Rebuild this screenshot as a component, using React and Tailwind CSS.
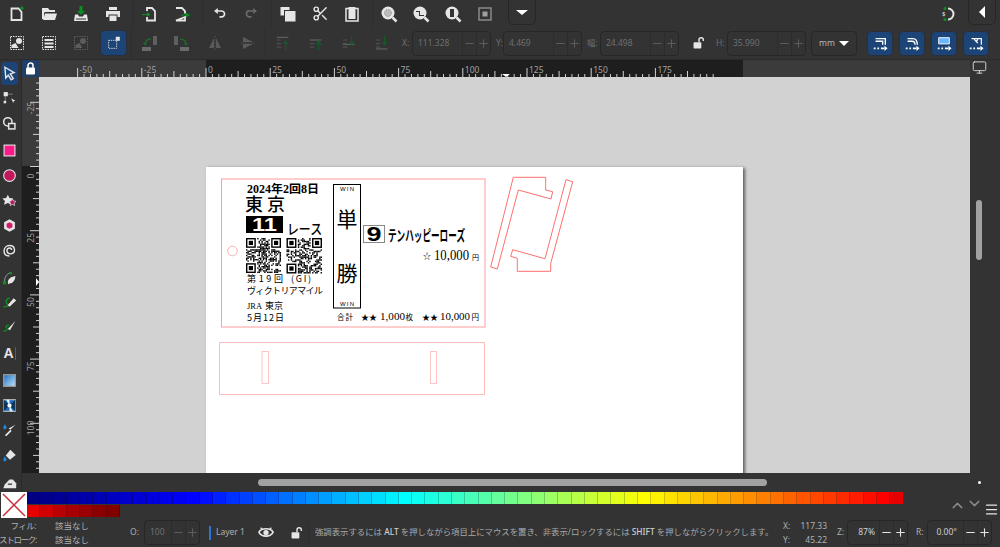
import React from 'react';
import { Minus, Plus, Scissors, ChevronUp, ChevronDown, Menu, Monitor } from 'lucide-react';

const W = '#e6e6e6';
const G = '#0c8f22';
const D = '#6a6a6a';

function Ic({ children, size = 18, className = '' }) {
  return <svg width={size} height={size} viewBox="0 0 18 18" className={className}>{children}</svg>;
}
const T = (p) => <Ic size={15} {...p} />;

const dashBox = (c = W) => <rect x="2.5" y="2.5" width="13" height="13" fill="none" stroke={c} strokeDasharray="1.5 1" />;

// 上のツールバー
const NewIcon = () => <Ic><path d="M3.5 3.5h7l3 3.5v8h-10z" fill="none" stroke={W} strokeWidth="1.8" /><path d="M14 .5l1 2 2 .6-2 1-1 2-1-2-2-1 2-.6z" fill={G} /></Ic>;
const OpenIcon = () => <Ic><path d="M2 3h6l1.5 2H15v2H5l-1 1v6H2z" fill={W} /><path d="M5 8.5h12l-2 6.5H3z" fill={W} /></Ic>;
const SaveIcon = () => <Ic><path d="M7.5 1h3v5h2.5L9 10 5 6h2.5z" fill={G} /><path d="M3 9.5h3l1 2h4l1-2h3l1 6.5H2z" fill={W} /><path d="M4 14h10" stroke="#333" /></Ic>;
const PrintIcon = () => <Ic><path d="M5 2h8v3H5zM2 6h14v6h-2.5V9.5h-9V12H2zM5.5 10.5h7V16h-7z" fill={W} /></Ic>;
const ImportIcon = () => <Ic><path d="M6 6V3h5l3 3v9.5H6V12" fill="none" stroke={W} strokeWidth="1.8" /><path d="M1 9h5V7l3.5 2.5L6 12v-2H1z" fill={G} /></Ic>;
const ExportIcon = () => <Ic><path d="M3 3h6l3 3v2.5M12 12v3.5H3z" fill="none" stroke={W} strokeWidth="1.8" /><path d="M8 9.500h5V7.500l4 2.500-4 2.500v-2H8z" fill={G} /></Ic>;
const UndoIcon = ({ c = W }) => <Ic size={15}><path d="M4 6h7a3.500 3.500 0 0 1 1 7H9" fill="none" stroke={c} strokeWidth="2" /><path d="M7 2.500v7L2.500 6z" fill={c} /></Ic>;
const RedoIcon = ({ c = D }) => <Ic size={15}><path d="M14 6H7a3.500 3.500 0 0 0-1 7h3" fill="none" stroke={c} strokeWidth="2" /><path d="M11 2.500v7L15.500 6z" fill={c} /></Ic>;
const CopyIcon = () => <Ic><path d="M1.500 2h9v3H5v5.500H1.500z" fill={W} /><rect x="6" y="6" width="10.500" height="10.500" fill={W} /></Ic>;
const PasteIcon = () => <Ic><path d="M3 3.500h12v12.500H3z" fill="none" stroke={W} strokeWidth="1.500" /><rect x="5.500" y="2" width="7" height="12" fill={W} /></Ic>;
const ZoomIcon = ({ inner }) => <Ic><circle cx="8" cy="8" r="6.500" fill={W} />{inner}<path d="M12.500 12.500L16.500 16.500" stroke={W} strokeWidth="2.500" /></Ic>;

// 下のツールバー
const SelAll = () => <Ic>{dashBox()}<path d="M3.500 11l4-2 3 5H3.500z" fill={W} /><circle cx="11" cy="7" r="3" fill={W} /></Ic>;
const SelLayers = () => <Ic>{dashBox()}<path d="M4.500 5h9v2h-9zM4.500 8.500h9v2h-9zM4.500 12h9v2h-9z" fill={W} /></Ic>;
const SelDim = () => <Ic>{dashBox('#5c5c5c')}<path d="M3.500 11l4-2 3 5H3.500z" fill="#5c5c5c" /><circle cx="11" cy="7" r="3" fill="#5c5c5c" /></Ic>;
const TouchIcon = () => <Ic size={16}><rect x="3" y="6" width="9" height="9" fill="none" stroke={W} strokeDasharray="1.500 1" /><rect x="11" y="2" width="4.500" height="4.500" fill={W} /></Ic>;
const RotL = () => <Ic><rect x="2" y="13" width="9" height="4" fill="#6b6b6b" /><rect x="13" y="2" width="4" height="9" fill="#5f5f5f" /><path d="M5 11c0-4 2-6 6-6" fill="none" stroke="#1c6a2c" strokeWidth="1.600" /><path d="M3 9h4l-2 3z" fill="#1c6a2c" /></Ic>;
const RotR = () => <Ic><rect x="7" y="13" width="9" height="4" fill="#6b6b6b" /><rect x="1" y="2" width="4" height="9" fill="#5f5f5f" /><path d="M13 11c0-4-2-6-6-6" fill="none" stroke="#1c6a2c" strokeWidth="1.600" /><path d="M11 9h4l-2 3z" fill="#1c6a2c" /></Ic>;
const FlipH = () => <Ic><path d="M8 4v10H3zM10 4l5 10h-5z" fill="#5a5a5a" /><path d="M9 2v14" stroke="#4c4c4c" strokeDasharray="2 1" /></Ic>;
const FlipV = () => <Ic><path d="M4 8h10L4 3zM4 10h10L4 15z" fill="#5a5a5a" /><path d="M2 9h14" stroke="#4c4c4c" strokeDasharray="2 1" /></Ic>;
const Raise = ({ v }) => (
  <Ic size={16}>
    {v === 0 && <path d="M2 2h13v1.300H2z" fill="#626262" />}
    {v === 3 && <path d="M2 15h13v1.300H2z" fill="#626262" />}
    {(v === 1 || v === 2) && <path d={v === 1 ? 'M2 5h13v1.300H2z' : 'M2 10h13v1.300H2z'} fill="#626262" />}
    <path d="M2 5h5v1.300H2zM2 9h5v1.300H2zM2 13h5v1.300H2z" fill="#4e4e4e" />
    <path d={v < 2 ? 'M12 17V8M9.500 10.500L12 7l2.500 3.500' : 'M12 1v9M9.500 7.500L12 11l2.500-3.500'} fill="none" stroke="#17592a" strokeWidth="1.400" />
  </Ic>
);
const LockOpen = () => <Ic size={14}><rect x="2" y="8" width="10" height="8" rx="1" fill={W} /><path d="M9 8V5a2.800 2.800 0 0 1 5.600 0v1.500" fill="none" stroke={W} strokeWidth="1.800" /></Ic>;
const Scale = ({ v }) => (
  <Ic size={16}>
    {v === 0 && <path d="M4 4h11v7M4 7h8v4" fill="none" stroke="#fff" strokeWidth="1.500" />}
    {v === 1 && <path d="M4 4h6c3.500 0 5 3 5 7M4 7h5c2.500 0 3.500 2 3.500 4" fill="none" stroke="#fff" strokeWidth="1.500" />}
    {v === 2 && <path d="M3 3h12v7H3z" fill="#6ab7ff" stroke="#fff" />}
    {v === 3 && <path d="M4 4h11v7M7 5l4 4M11 5l-2 3" fill="none" stroke="#fff" strokeWidth="1.300" />}
    <path d="M2 15h2M6 15h2M10 15h4" stroke="#fff" strokeWidth="1.800" />
    <path d="M14 12l3.500 3-3.500 3z" fill="#fff" />
  </Ic>
);

// 左のツール
const tools = [
  <T key="a"><path d="M3.500 1.500l11 6.500-4.500 1.500 3.500 5.500-2.500 1.500-3.500-5.500-3 3.500z" fill="#174a80" stroke={W} strokeWidth="1.700" /></T>,
  <T key="b"><path d="M4 5v9M4 5h9" stroke="#888" fill="none" /><rect x="2" y="2.500" width="5" height="5" fill={W} /><rect x="2" y="13" width="3" height="3" fill={W} /><path d="M11 10l5 3-2 .5-.5 2z" fill={W} /></T>,
  <T key="c"><circle cx="7" cy="7" r="5" fill="none" stroke={W} strokeWidth="1.800" /><rect x="8" y="9" width="7.500" height="6.500" fill="#333" stroke={W} strokeWidth="1.800" /></T>,
  <T key="d"><rect x="2.500" y="2.500" width="13" height="13" fill="#ff1a8c" stroke={W} strokeWidth="1.300" /></T>,
  <T key="e"><circle cx="9" cy="9" r="7" fill="#c2185b" stroke={W} strokeWidth="1.300" /></T>,
  <T key="f"><path d="M7 2l2 4 4.500.5-3 3 1 4.500L7 12l-4.500 2 1-4.500-3-3L5 6z" fill={W} /><path d="M12.500 7l1.300 2.600 3 .4-2.200 2 .6 3-2.700-1.400-2.700 1.400.6-3-2.200-2 3-.4z" fill="#b0165a" stroke={W} strokeWidth=".8" /></T>,
  <T key="g"><path d="M9 1.500l6.500 3.500v8L9 16.500 2.500 13V5z" fill={W} /><path d="M9 5l3.500 2v4L9 13l-3.500-2V7z" fill="#d11d6b" /></T>,
  <T key="h"><path d="M9 15.500c-4 0-6.500-2.500-6.500-6S5 3 9 3s6 2.500 6 5.500S13 13 10 13s-4-2-4-4 1.500-3 3-3 2.500 1 2.500 2.500" fill="none" stroke={W} strokeWidth="1.700" /></T>,
  <T key="i"><path d="M3 13C3 7 6 3 11 2" fill="none" stroke="#aaa" /><rect x="1" y="12" width="4" height="4" fill={G} /><rect x="9" y="1" width="3" height="3" fill={G} /><path d="M7 14c0-4 3-7 9-8 0 5-3 9-7 9l-1.500 1z" fill={W} /></T>,
  <T key="j"><path d="M2 15c2-3 4 0 5-2s-3-3-2-6 3-2 4-4" fill="none" stroke={G} strokeWidth="1.700" /><path d="M7 12l7-8 3 2.500-8 7.500z" fill={W} /></T>,
  <T key="k"><path d="M2 15c2-2 3 0 4-2s-2-2-1-4 2 0 3-2" fill="none" stroke={G} strokeWidth="1.500" /><path d="M7 12l9-9.500-6.500 11z" fill={W} /></T>,
  <div key="l" className="flex items-center"><span className="font-['Liberation_Sans',sans-serif] text-[14px] leading-none font-bold text-[#e6e6e6]">A</span><span className="ml-[1px] h-[13px] w-[1px] bg-[#0c8f22]" /></div>,
  <T key="m"><defs><linearGradient id="grad" x1="0" y1="0" x2="1" y2="1"><stop offset="0" stopColor="#1c6fc0" /><stop offset="1" stopColor="#bfe3ff" /></linearGradient></defs><rect x="2" y="2" width="14" height="14" fill="url(#grad)" stroke="#999" strokeWidth="1.500" /></T>,
  <T key="n"><rect x="2" y="2" width="14" height="14" fill="#1c6fc0" stroke="#bbb" strokeWidth="1.300" /><path d="M2 2l7 7-7 7zM16 2l-7 7 7 7z" fill="#0d3558" /><circle cx="9" cy="9" r="2.500" fill="#fff" /><path d="M5 2h4L9 9zM13 16H9l0-7z" fill="#eaf4ff" /></T>,
  <T key="o"><path d="M16 2l-6 6 1.500 1.500-6 6H4v-1.500l6-6L8 6.500z" fill={W} /><path d="M3.500 1.500c1 2 2 3 2 4a2 2 0 0 1-4 0c0-1 1-2 2-4z" fill="#1b8ae0" /></T>,
  <T key="p"><path d="M10 2l6.500 6.500-7 5.500-5-5z" fill={W} /><path d="M3.500 10c1 2 2 3 2 4a2 2 0 0 1-4 0c0-1 1-2 2-4z" fill="#1b8ae0" /></T>,
  <T key="q"><path d="M1.500 16l2-5 5.500-5.500h4L17 10v6z" fill={W} /><path d="M7 11h5" stroke="#333" strokeWidth="1.500" /></T>,
];
const toolH = ['h-[24px]', 'h-[28px]', 'h-[26px]', 'h-[24px]', 'h-[26px]', 'h-[24px]', 'h-[26px]', 'h-[30px]', 'h-[18px]', 'h-[30px]', 'h-[24px]', 'h-[30px]', 'h-[20px]', 'h-[30px]', 'h-[20px]', 'h-[26px] pt-[8px]'];

function Spin({ value, w, light = false, align = 'left', vw = '' }) {
  const c = light ? 'text-[#cfcfcf]' : 'text-[#6f6f6f]';
  const ctl = light ? 'text-[#e6e6e6]' : 'text-[#5c5c5c]';
  return (
    <div className={`flex h-[25px] items-center rounded-[4px] border border-[#272727] ${w}`}>
      <span className={`${vw} ${align === 'right' ? 'text-right' : 'pl-[5px]'} ${c}`}>{value}</span>
      <div className={`ml-auto flex h-full items-center border-l border-[#2c2c2c] ${ctl}`}>
        <Minus size={13} strokeWidth={2} />
      </div>
      <div className={`flex h-full items-center border-l border-[#2c2c2c] ${ctl}`}>
        <Plus size={13} strokeWidth={2} />
      </div>
    </div>
  );
}

const Btn = ({ children, w = 'w-8' }) => <div className={`flex h-full shrink-0 items-center justify-center ${w}`}>{children}</div>;
const Sep = () => <div className="h-full w-[5px] shrink-0 border-r border-[#2e2e2e]" />;
const BlueBtn = ({ children }) => <div className="flex h-[25px] w-[26px] items-center justify-center rounded-[4px] border border-[#282f38] bg-[#1c4476]">{children}</div>;

const hStart = 206;
const unit = 64.2;

function HRuler() {
  const ticks = [];
  for (let i = -20; i < 80; i++) {
    const x = hStart + (i * unit) / 10;
    if (x < 39 || x > 970) continue;
    const major = i % 10 === 0;
    const mid = i % 5 === 0;
    ticks.push(<line key={i} x1={x} x2={x} y1={major ? 68 : mid ? 71 : 74} y2="77" stroke="#d0d0d0" strokeWidth="1" />);
    if (major) {
      ticks.push(<text key={'t' + i} x={x + 2} y="73" fontSize="8.500" fill="#a0a0a0" className="font-['Noto_Sans',sans-serif]">{i * 2.5}</text>);
    }
  }
  return (
    <svg width="931" height="17" viewBox="39 60 931 17" className="shrink-0">
      <rect x="39" y="60" width="931" height="17" fill="#3b3b3b" />
      <rect x="206" y="60" width="537" height="17" fill="#1e1e1e" />
      {ticks}
      <path d="M502 74h8l-4 3z" fill="#fff" />
    </svg>
  );
}

function VRuler() {
  const ticks = [];
  for (let i = -14; i < 50; i++) {
    const y = 166.500 + (i * unit) / 10;
    if (y < 77 || y > 473) continue;
    const major = i % 10 === 0;
    const mid = i % 5 === 0;
    ticks.push(<line key={i} y1={y} y2={y} x1={major ? 30 : mid ? 33 : 36} x2="39" stroke="#d0d0d0" strokeWidth="1" />);
    if (major) {
      ticks.push(<text key={'t' + i} transform={`translate(34 ${y + 12}) rotate(-90)`} fontSize="8.500" fill="#a0a0a0" className="font-['Noto_Sans',sans-serif]">{i * 2.5}</text>);
    }
  }
  return (
    <svg width="17" height="396" viewBox="22 77 17 396" className="shrink-0">
      <rect x="22" y="77" width="17" height="396" fill="#3b3b3b" />
      <rect x="22" y="166" width="17" height="307" fill="#1e1e1e" />
      {ticks}
      <path d="M36 278v8l3-4z" fill="#fff" />
    </svg>
  );
}

// QR は見た目だけの疑似パターン
function Qr({ x, y, size, seed }) {
  const n = 25;
  const m = size / n;
  const cells = [];
  let s = seed;
  const inFinder = (c, r) => (c < 8 && r < 8) || (c > n - 9 && r < 8) || (c < 8 && r > n - 9);
  for (let r = 0; r < n; r++) {
    for (let c = 0; c < n; c++) {
      s = (s * 1103515245 + 12345) & 0x7fffffff;
      if (!inFinder(c, r) && (s >> 16) % 100 < 52) {
        cells.push(<rect key={r + '-' + c} x={x + c * m} y={y + r * m} width={m} height={m} fill="#000" />);
      }
    }
  }
  const finder = (c, r) => (
    <g key={c + '_' + r}>
      <rect x={x + c * m + m / 2} y={y + r * m + m / 2} width={6 * m} height={6 * m} fill="none" stroke="#000" strokeWidth={m} />
      <rect x={x + (c + 2) * m} y={y + (r + 2) * m} width={3 * m} height={3 * m} fill="#000" />
    </g>
  );
  return <g>{cells}{finder(0, 0)}{finder(n - 7, 0)}{finder(0, n - 7)}</g>;
}

const jp = "font-['Noto_Sans_CJK_JP',sans-serif]";
const se = "font-['Liberation_Serif','Noto_Sans_CJK_JP',serif]";
const ar = "font-['Liberation_Sans',sans-serif]";

function Ticket() {
  return (
    <svg width="537" height="306" viewBox="206 167 537 306">
      <rect x="221.500" y="179" width="263.500" height="148" fill="none" stroke="#ff9c9c" />
      <circle cx="232.500" cy="251" r="4.800" fill="none" stroke="#ffb0b0" />

      <text x="247" y="193" fontSize="11.500" fontWeight="700" textLength="72" lengthAdjust="spacingAndGlyphs" className={se}>2024年2回8日</text>
      <text x="245" y="211" fontSize="18" fontWeight="500" textLength="40" className={jp}>東京</text>
      <rect x="246" y="216" width="37" height="17" fill="#000" />
      <text x="252" y="231" fontSize="18" fontWeight="700" fill="#fff" textLength="25" lengthAdjust="spacingAndGlyphs" className={ar}>11</text>
      <text x="287" y="234" fontSize="14" fontWeight="500" textLength="35" lengthAdjust="spacingAndGlyphs" className={jp}>レース</text>

      <Qr x={246} y={238} size={35} seed={7} />
      <Qr x={286.500} y={238} size={35.500} seed={91} />

      <text x="247" y="282" fontSize="9" textLength="36" className={jp}>第19回</text>
      <text x="291" y="282" fontSize="9" textLength="20" fill="#000" className={jp}>(GI)</text>
      <text x="247" y="294" fontSize="9" textLength="76" className={jp}>ヴィクトリアマイル</text>
      <text x="247" y="309" fontSize="9" textLength="15" lengthAdjust="spacingAndGlyphs" className={se}>JRA</text>
      <text x="265" y="309" fontSize="9" textLength="18" className={jp}>東京</text>
      <text x="247" y="321" fontSize="9" textLength="37" className={jp}>5月12日</text>

      <rect x="333.500" y="184.500" width="27" height="123.500" fill="none" stroke="#000" />
      <text x="340" y="191" fontSize="6" textLength="14" className={ar}>WIN</text>
      <text x="340" y="306" fontSize="6" textLength="14" className={ar}>WIN</text>
      <text x="347" y="227" fontSize="21" textAnchor="middle" className={jp}>単</text>
      <text x="347" y="281" fontSize="21" textAnchor="middle" className={jp}>勝</text>

      <rect x="363.500" y="225.500" width="21" height="17" fill="none" stroke="#8a8a8a" />
      <text x="366.500" y="241" fontSize="20" fontWeight="700" textLength="15" lengthAdjust="spacingAndGlyphs" className={ar}>9</text>
      <text x="388" y="241" fontSize="15" fontWeight="700" textLength="77" lengthAdjust="spacingAndGlyphs" className={jp}>テンハッピーローズ</text>

      <text x="423" y="258.500" fontSize="8" textLength="8" className={jp}>☆</text>
      <text x="434" y="260" fontSize="15" textLength="35" lengthAdjust="spacingAndGlyphs" className={se}>10,000</text>
      <text x="472" y="260" fontSize="7" className={jp}>円</text>

      <text x="337" y="320" fontSize="7.500" textLength="16" className={jp}>合計</text>
      <text x="361" y="320" fontSize="8" textLength="16" className={jp}>★★</text>
      <text x="380" y="320" fontSize="11" textLength="25" lengthAdjust="spacingAndGlyphs" className={se}>1,000</text>
      <text x="405.500" y="320" fontSize="7.500" className={jp}>枚</text>
      <text x="422" y="320" fontSize="8" textLength="16" className={jp}>★★</text>
      <text x="440" y="320" fontSize="11" textLength="30" lengthAdjust="spacingAndGlyphs" className={se}>10,000</text>
      <text x="471.500" y="320" fontSize="7.500" className={jp}>円</text>

      <path d="M513.300 177.300H545.700V190L552.700 191.700L551 199L518.300 190L497.300 269L490.700 267Z" fill="none" stroke="#ff6f6f" />
      <path d="M566 179.700L572.700 181.700L550.700 263.300V271.300H517.300V258.300L510.700 256.300L512.700 249.700L545 258.700Z" fill="none" stroke="#ff6f6f" />

      <rect x="219.500" y="342.500" width="265" height="52" fill="none" stroke="#ffbcbc" />
      <rect x="262" y="351.500" width="6.500" height="32" fill="none" stroke="#ffc4c4" />
      <rect x="430.500" y="351.500" width="6" height="32" fill="none" stroke="#ffc4c4" />
    </svg>
  );
}

function paletteColors() {
  const out = [];
  const mix = (a, b, t) => a.map((v, i) => Math.round(v + (b[i] - v) * t));
  const stops = [
    [0, [0, 0, 128]],
    [12, [0, 0, 255]],
    [28, [0, 255, 255]],
    [37, [128, 255, 128]],
    [46, [255, 255, 0]],
    [64, [255, 0, 0]],
    [65, [230, 0, 0]],
  ];
  for (let i = 0; i < 66; i++) {
    let k = 0;
    while (k < stops.length - 2 && i > stops[k + 1][0]) k++;
    const [a, ca] = stops[k];
    const [b, cb] = stops[k + 1];
    const c = mix(ca, cb, (i - a) / (b - a));
    out.push(`rgb(${c[0]},${c[1]},${c[2]})`);
  }
  return out;
}

const reds = ['#e60000', '#d00000', '#ba0000', '#a80000', '#9a0000', '#8a0000', '#800000'];

export default function App() {
  return (
    <div className="flex h-[547px] w-[1000px] flex-col overflow-hidden bg-[#333333] font-['Noto_Sans','Noto_Sans_CJK_JP',sans-serif] text-[8.5px] text-[#b0b0b0]">
      {/* コマンドバー */}
      <div className="flex h-[27px] shrink-0 items-center pl-[1px]">
        <Btn><NewIcon /></Btn>
        <Btn><OpenIcon /></Btn>
        <Btn><SaveIcon /></Btn>
        <Btn><PrintIcon /></Btn>
        <Sep />
        <Btn><ImportIcon /></Btn>
        <Btn><ExportIcon /></Btn>
        <Sep />
        <Btn><UndoIcon /></Btn>
        <Btn><RedoIcon /></Btn>
        <Sep />
        <Btn><CopyIcon /></Btn>
        <Btn><Scissors size={17} color={W} strokeWidth={2} /></Btn>
        <Btn><PasteIcon /></Btn>
        <Sep />
        <Btn><ZoomIcon inner={<circle cx="8" cy="8" r="3.500" fill="#bbb" stroke="#888" strokeDasharray="1 1" />} /></Btn>
        <Btn><ZoomIcon inner={<path d="M4 6h4v4h4v1H7V7H4z" fill="#333" />} /></Btn>
        <Btn><ZoomIcon inner={<rect x="6" y="4" width="4" height="8" fill="#333" />} /></Btn>
        <Btn><Ic><rect x="3" y="3" width="12" height="12" fill="none" stroke="#8a8a8a" strokeWidth="1.500" /><rect x="6.500" y="6.500" width="5" height="5" fill="#a0a0a0" /></Ic></Btn>
        <div className="ml-[7px] flex h-[25px] w-[28px] items-center justify-center self-start rounded-b-[5px] border border-t-0 border-[#272727]">
          <div className="h-0 w-0 border-x-[6px] border-t-[5px] border-x-transparent border-t-white" />
        </div>
        <div className="ml-auto mr-[10px]">
          <Ic><path d="M8 3.500a5.500 5.500 0 1 1 0 11" fill="none" stroke={W} strokeWidth="2" /><circle cx="5" cy="3.500" r="1.500" fill={G} /><circle cx="5" cy="14.500" r="1.500" fill={G} /><text x="2" y="11" fontSize="6" fill={W}>$</text></Ic>
        </div>
        <div className="mr-[4px] flex h-[25px] w-[28px] items-center justify-center self-start rounded-b-[5px] border border-t-0 border-[#272727]">
          <div className="h-0 w-0 border-y-[6px] border-r-[6px] border-y-transparent border-r-white" />
        </div>
      </div>

      {/* コントロールバー */}
      <div className="flex h-[33px] shrink-0 items-center border-b border-[#2b2b2b] pl-[1px]">
        <Btn><SelAll /></Btn>
        <Btn><SelLayers /></Btn>
        <Btn><SelDim /></Btn>
        <div className="ml-[3px] flex h-[26px] w-[27px] shrink-0 items-center justify-center rounded-[4px] border border-[#282f38] bg-[#1c4476]"><TouchIcon /></div>
        <Sep />
        <Btn w="w-[33px]"><RotL /></Btn>
        <Btn w="w-[33px]"><RotR /></Btn>
        <Btn w="w-[33px]"><FlipH /></Btn>
        <Btn w="w-[33px]"><FlipV /></Btn>
        <div className="h-full w-[2px] shrink-0 border-r border-[#2e2e2e]" />
        <Btn w="w-[33px]"><Raise v={0} /></Btn>
        <Btn w="w-[33px]"><Raise v={1} /></Btn>
        <Btn w="w-[33px]"><Raise v={2} /></Btn>
        <Btn w="w-[33px]"><Raise v={3} /></Btn>
        <span className="ml-[4px] w-[10px] text-[#6f6f6f]">X:</span>
        <Spin value="111.328" w="w-[79px]" />
        <span className="ml-[5px] w-[7px] text-[#6f6f6f]">Y:</span>
        <Spin value="4.469" w="w-[79px]" />
        <span className="ml-[5px] w-[13px] text-[#6f6f6f]">幅:</span>
        <Spin value="24.498" w="w-[79px]" />
        <div className="ml-[13px] w-[24px]"><LockOpen /></div>
        <span className="w-[11px] text-[#6f6f6f]">H:</span>
        <Spin value="35.990" w="w-[79px]" />
        <div className="ml-[5px] flex h-[25px] w-[46px] items-center justify-center gap-[4px] rounded-[4px] border border-[#272727] text-[#b8b8b8]">
          mm
          <div className="h-0 w-0 border-x-[5px] border-t-[5px] border-x-transparent border-t-white" />
        </div>
        <div className="ml-[10px] flex gap-[6px]">
          <BlueBtn><Scale v={0} /></BlueBtn>
          <BlueBtn><Scale v={1} /></BlueBtn>
          <BlueBtn><Scale v={2} /></BlueBtn>
          <BlueBtn><Scale v={3} /></BlueBtn>
        </div>
      </div>

      {/* 中央 */}
      <div className="flex h-[431px] shrink-0">
        <div className="flex w-[22px] shrink-0 flex-col items-center border-r border-[#2a2a2a] pr-[2px]">
          <div className="mt-[2px] flex h-[23px] w-[17px] shrink-0 items-center justify-center rounded-[4px] bg-[#1c4476]">{tools[0]}</div>
          {tools.slice(1).map((t, i) => (
            <div key={i} className={`flex w-full shrink-0 items-center justify-center ${toolH[i]}`}>{t}</div>
          ))}
        </div>
        <div className="flex min-w-0 flex-1 flex-col">
          <div className="flex h-[17px] shrink-0">
            <div className="flex w-[17px] shrink-0 items-center justify-center bg-[#1f3f69]">
              <svg width="11" height="13" viewBox="0 0 11 13"><rect x="1" y="5.500" width="9" height="7" rx="1" fill="#fff" /><path d="M3 6V3.500a2.500 2.500 0 0 1 5 0V6" fill="none" stroke="#fff" strokeWidth="1.500" /></svg>
            </div>
            <HRuler />
            <div className="flex w-[30px] shrink-0 justify-start pl-[2px] text-[#d8d8d8]"><Monitor size={15} strokeWidth={1.500} /></div>
          </div>
          <div className="flex h-[396px] shrink-0">
            <VRuler />
            <div className="relative w-[931px] shrink-0 overflow-hidden bg-[#d2d2d2]">
              <div className="absolute top-[90px] left-[167px] h-[400px] w-[537px] bg-white shadow-[2px_1px_3px_rgba(0,0,0,0.55)]">
                <Ticket />
              </div>
            </div>
            <div className="flex w-[30px] shrink-0 justify-start pt-[123px] pl-[6px]">
              <div className="h-[60px] w-[6px] rounded-full bg-[#a2a2a2]" />
            </div>
          </div>
          <div className="flex h-[18px] shrink-0 items-center">
            <div className="ml-[236px] h-[7px] w-[509px] rounded-full bg-[#a2a2a2]" />
            <div className="ml-[211px] h-[3px] w-[3px] rounded-full bg-white" />
          </div>
        </div>
      </div>

      {/* パレット */}
      <div className="flex h-[27px] shrink-0 pt-[1px]">
        <svg width="26" height="26" viewBox="0 0 26 26" className="ml-[1px] shrink-0">
          <rect width="26" height="26" fill="#fff" />
          <path d="M2 2L24 24M24 2L2 24" stroke="#c9343f" strokeWidth="1.500" />
        </svg>
        <div className="flex flex-col gap-[1px]">
          <div className="flex">
            {paletteColors().map((c, i) => <div key={i} className="h-[12px] w-[13.290px] border-r border-black/20" style={{ background: c }} />)}
          </div>
          <div className="flex">
            {reds.map((c) => <div key={c} className="h-[12px] w-[13.290px] border-r border-black/20" style={{ background: c }} />)}
          </div>
        </div>
        <div className="ml-auto mr-[1px] flex items-end pb-[1px] text-[#8a8a8a]">
          <ChevronUp size={17} strokeWidth={2} className="mb-[3px]" />
          <ChevronDown size={17} strokeWidth={2} className="mb-[5px]" />
          <Menu size={15} strokeWidth={2} color="#e6e6e6" className="ml-[1px]" />
        </div>
      </div>

      {/* ステータスバー */}
      <div className="flex h-[29px] shrink-0 items-center">
        <div className="flex w-[36px] shrink-0 flex-col items-end leading-[14px]">
          <span className="tracking-[-0.5px]">フィル:</span>
          <span className="tracking-[-1.300px] whitespace-nowrap">ストローク:</span>
        </div>
        <div className="ml-[19px] flex w-[60px] shrink-0 flex-col leading-[14px]">
          <span>該当なし</span>
          <span>該当なし</span>
        </div>
        <span className="ml-[15px] w-[14px] shrink-0">O:</span>
        <div className="shrink-0"><Spin value="100" w="w-[56px]" /></div>
        <div className="ml-[9px] h-[14px] w-[2px] shrink-0 bg-[#2f74d0]" />
        <span className="ml-[5px] w-[36px] shrink-0 whitespace-nowrap">Layer 1</span>
        <div className="ml-[6px] w-[32px] shrink-0">
          <Ic size={16}><path d="M1 8c3-5 13-5 16 0-3 6-13 6-16 0z" fill="none" stroke={W} strokeWidth="1.800" /><circle cx="9" cy="8.500" r="3" fill={W} /><path d="M3 3l2 2M15 3l-2 2" stroke={W} strokeWidth="1.500" /></Ic>
        </div>
        <div className="w-[16px] shrink-0"><LockOpen /></div>
        <div className="ml-[2px] h-[24px] w-[1px] shrink-0 bg-[#2e2e2e]" />
        <span className="ml-[6px] w-[434px] shrink-0 whitespace-nowrap text-[8.400px] text-[#a8a8a8]">強調表示するには <b className="font-medium text-[#cfcfcf]">ALT</b> を押しながら項目上にマウスを置き、非表示/ロックするには <b className="font-medium text-[#cfcfcf]">SHIFT</b> を押しながらクリックします。</span>
        <div className="ml-[34px] grid w-[44px] shrink-0 grid-cols-[auto_1fr] gap-x-[4px] leading-[14px]">
          <span>X:</span><span className="text-right">117.33</span>
          <span>Y:</span><span className="text-right">45.22</span>
        </div>
        <span className="ml-[10px] w-[10px] shrink-0">Z:</span>
        <div className="shrink-0"><Spin value="87%" w="w-[61px]" light align="right" vw="w-[27px]" /></div>
        <span className="ml-[8px] w-[11px] shrink-0">R:</span>
        <div className="shrink-0"><Spin value="0.00°" w="w-[65px]" light align="right" vw="w-[29px]" /></div>
      </div>
    </div>
  );
}
